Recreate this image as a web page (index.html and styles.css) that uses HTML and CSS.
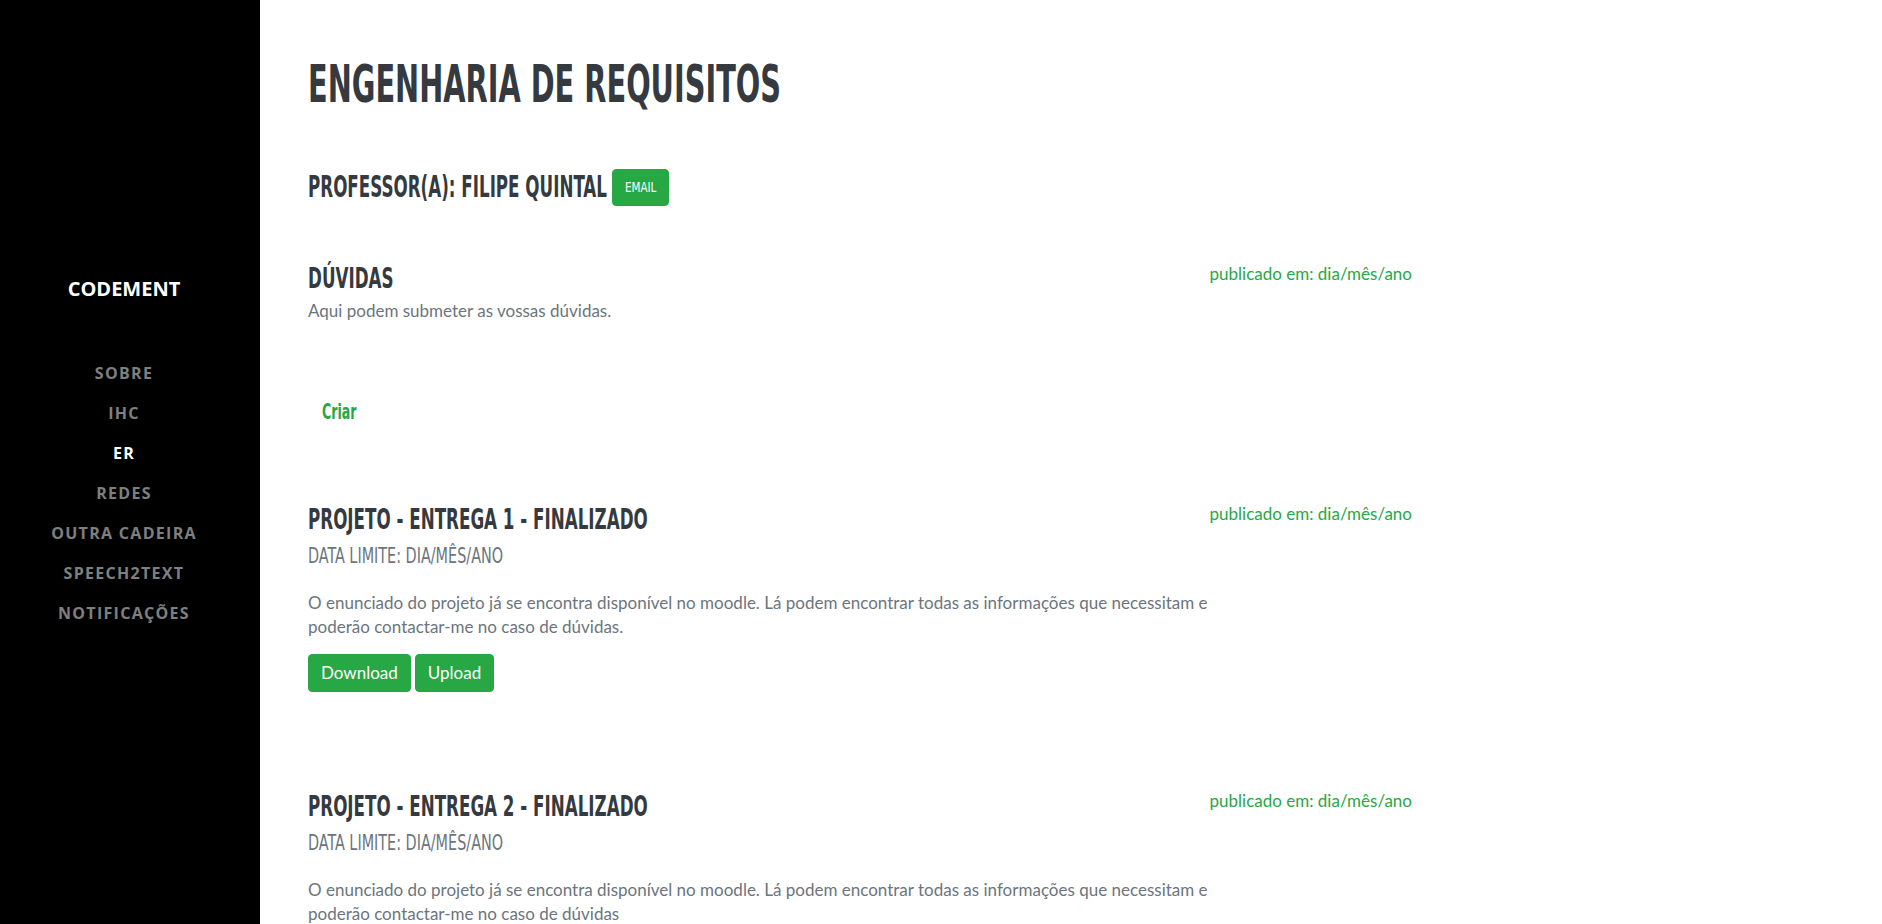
FILE: index.html
```html
<!DOCTYPE html>
<html lang="pt">
<head>
<meta charset="utf-8">
<title>Engenharia de Requisitos</title>
<link rel="stylesheet" href="styles.css">
</head>
<body>
<div class="layout">
  <nav class="sidebar">
    <a class="brand" href="#">CODEMENT</a>
    <ul class="nav">
      <li><a class="nav-link" href="#">Sobre</a></li>
      <li><a class="nav-link" href="#">IHC</a></li>
      <li><a class="nav-link active" href="#">ER</a></li>
      <li><a class="nav-link" href="#">Redes</a></li>
      <li><a class="nav-link" href="#">Outra cadeira</a></li>
      <li><a class="nav-link" href="#">Speech2Text</a></li>
      <li><a class="nav-link" href="#">Notificações</a></li>
    </ul>
  </nav>
  <main class="main">
    <section class="section">
      <h1 class="page-title"><span class="cond">Engenharia de Requisitos</span></h1>
      <div class="prof-row">
        <h3 class="prof"><span class="cond">Professor(a): Filipe Quintal</span></h3>
        <a class="btn btn-email" href="#"><span class="cond-sm">Email</span></a>
      </div>

      <div class="item item-first">
        <div class="item-content">
          <h3 class="item-title"><span class="cond">Dúvidas</span></h3>
          <p class="item-lead">Aqui podem submeter as vossas dúvidas.</p>
        </div>
        <div class="item-date">publicado em: dia/mês/ano</div>
      </div>
      <a class="link-criar" href="#"><span class="cond-sm">Criar</span></a>

      <div class="item item-project">
        <div class="item-content">
          <h3 class="item-title"><span class="cond">Projeto - Entrega 1 - Finalizado</span></h3>
          <div class="item-sub"><span class="cond-sm">Data limite: dia/mês/ano</span></div>
          <p class="item-text">O enunciado do projeto já se encontra disponível no moodle. Lá podem encontrar todas as informações que necessitam e poderão contactar-me no caso de dúvidas.</p>
          <div class="btn-row">
            <a class="btn btn-green" href="#">Download</a>
            <a class="btn btn-green" href="#">Upload</a>
          </div>
        </div>
        <div class="item-date">publicado em: dia/mês/ano</div>
      </div>

      <div class="item item-project item-second">
        <div class="item-content">
          <h3 class="item-title"><span class="cond">Projeto - Entrega 2 - Finalizado</span></h3>
          <div class="item-sub"><span class="cond-sm">Data limite: dia/mês/ano</span></div>
          <p class="item-text">O enunciado do projeto já se encontra disponível no moodle. Lá podem encontrar todas as informações que necessitam e poderão contactar-me no caso de dúvidas</p>
          <div class="btn-row">
            <a class="btn btn-green" href="#">Download</a>
            <a class="btn btn-green" href="#">Upload</a>
          </div>
        </div>
        <div class="item-date">publicado em: dia/mês/ano</div>
      </div>
    </section>
  </main>
</div>
</body>
</html>
```

FILE: styles.css
```css
html, body {
  margin: 0;
  padding: 0;
}
body {
  font-family: "Lato", "Open Sans", sans-serif;
  font-size: 17px;
  color: #6c757d;
  background: #fff;
}
a { text-decoration: none; }

.layout {
  display: grid;
  grid-template-columns: 260px 1fr;
  min-height: 100vh;
}

/* Sidebar */
.sidebar {
  position: sticky;
  top: 0;
  height: 100vh;
  background: #000;
  display: flex;
  flex-direction: column;
  align-items: center;
  padding: 274px 12px 0 0;
  box-sizing: border-box;
  font-family: "Open Sans", "DejaVu Sans", sans-serif;
}
.brand {
  color: #fff;
  font-weight: 700;
  font-size: 20px;
  line-height: 30px;
}
.nav {
  list-style: none;
  margin: 49px 0 0;
  padding: 0;
  text-align: center;
}
.nav-link {
  display: block;
  line-height: 40px;
  font-size: 16px;
  font-weight: 700;
  letter-spacing: 1.3px;
  text-transform: uppercase;
  color: rgba(255, 255, 255, 0.5);
}
.nav-link.active { color: #fff; }

/* Main */
.main { min-width: 0; }
.section {
  max-width: 1200px;
  box-sizing: border-box;
  padding: 60px 48px 40px;
}
.cond, .cond-sm {
  display: inline-block;
  transform-origin: 50% 50%;
}
.page-title {
  margin: 0;
  font-family: "DejaVu Sans Condensed", "Liberation Sans Narrow", sans-serif;
  font-weight: 700;
  font-size: 32px;
  line-height: 48px;
  color: #343a40;
  text-transform: uppercase;
  letter-spacing: 0;
}
.page-title .cond { transform: scaleY(1.62); }

.prof-row {
  display: flex;
  align-items: center;
  gap: 5px;
  margin-top: 59px;
  height: 40px;
}
.prof {
  margin: 0;
  font-family: "DejaVu Sans Condensed", "Liberation Sans Narrow", sans-serif;
  font-weight: 700;
  font-size: 18.6px;
  line-height: 32px;
  color: #343a40;
  text-transform: uppercase;
}
.prof .cond { transform: scaleY(1.6); }

.btn {
  display: inline-block;
  box-sizing: border-box;
  border: 1px solid #28a745;
  border-radius: 4px;
  background: #28a745;
  color: #fff;
}
.btn-email {
  height: 37px;
  line-height: 35px;
  padding: 0 12px;
  font-family: "DejaVu Sans Condensed", "Liberation Sans Narrow", sans-serif;
  font-size: 11.5px;
  text-transform: uppercase;
  margin-top: 1px;
}
.btn-email .cond-sm { transform: scaleY(1.2); }

.item {
  display: flex;
  align-items: flex-start;
}
.item-first { margin-top: 55px; }
.item-content {
  flex: 1 1 auto;
  min-width: 0;
}
.item-date {
  flex: 0 0 200px;
  text-align: right;
  line-height: 24px;
  color: #28a745;
  white-space: nowrap;
}
.item-title {
  margin: 1px 0 0;
  font-family: "DejaVu Sans Condensed", "Liberation Sans Narrow", sans-serif;
  font-weight: 700;
  font-size: 18.6px;
  line-height: 32px;
  color: #343a40;
  text-transform: uppercase;
}
.item-title .cond { transform: scaleY(1.55); }
.item-lead {
  margin: 4px 0 0;
  line-height: 24px;
}

.link-criar {
  display: inline-block;
  margin-top: 77px;
  padding-left: 14px;
  font-family: "DejaVu Sans Condensed", "Liberation Sans Narrow", sans-serif;
  font-weight: 700;
  font-size: 14px;
  line-height: 24px;
  color: #28a745;
}
.link-criar .cond-sm { transform: scaleY(1.45); }

.item-project { margin-top: 78px; }
.item-project .item-title { margin-top: 2px; }
.item-second { margin-top: 97px; }
.item-sub {
  margin-top: 8px;
  font-family: "DejaVu Sans Condensed", "Liberation Sans Narrow", sans-serif;
  font-size: 16px;
  line-height: 24px;
  color: #6c757d;
  text-transform: uppercase;
}
.item-sub .cond-sm { transform: scaleY(1.3); }
.item-text {
  margin: 23px 0 0;
  line-height: 24px;
}
.btn-row {
  display: flex;
  gap: 4px;
  margin-top: 15px;
}
.btn-green {
  height: 38px;
  line-height: 36px;
  padding: 0 12px;
  font-size: 17px;
}
```
